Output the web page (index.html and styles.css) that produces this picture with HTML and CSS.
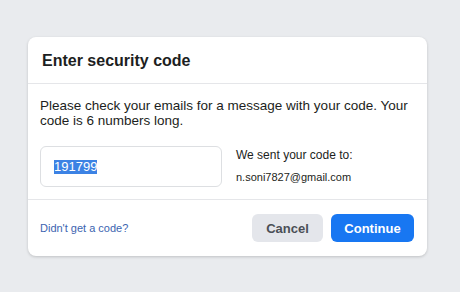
FILE: index.html
```html
<!DOCTYPE html>
<html>
<head>
<meta charset="utf-8">
<link rel="stylesheet" href="styles.css">
</head>
<body>
<div class="card">
  <div class="card-header">Enter security code</div>
  <div class="card-body">
    <p class="intro">Please check your emails for a message with your code. Your code is 6 numbers long.</p>
    <div class="code-row">
      <div class="code-input"><span class="sel">191799</span></div>
      <div class="sent">
        <div class="sent-label">We sent your code to:</div>
        <div class="sent-email">n.soni7827@gmail.com</div>
      </div>
    </div>
  </div>
  <div class="card-footer">
    <a class="link" href="#">Didn't get a code?</a>
    <div class="actions">
      <button class="btn btn-cancel">Cancel</button>
      <button class="btn btn-continue">Continue</button>
    </div>
  </div>
</div>
</body>
</html>
```
FILE: styles.css
```css
html, body {
  margin: 0;
  padding: 0;
}
body {
  background: #e9ebee;
  font-family: "Liberation Sans", Arial, sans-serif;
  color: #1c1e21;
  width: 460px;
  height: 292px;
  overflow: hidden;
}
.card {
  margin: 37px 0 0 28px;
  width: 399px;
  background: #fff;
  border-radius: 8px;
  box-shadow: 0 1px 3px rgba(0, 0, 0, 0.18);
}
.card-header {
  height: 47px;
  box-sizing: border-box;
  padding: 15px 0 0 14px;
  font-size: 16px;
  font-weight: bold;
  color: #1c1e21;
  border-bottom: 1px solid #e5e6e9;
}
.card-body {
  padding: 14px 12px 12px 12px;
  border-bottom: 1px solid #e5e6e9;
}
.intro {
  margin: 0;
  font-size: 13.5px;
  line-height: 15px;
  color: #1c1e21;
}
.code-row {
  display: flex;
  margin-top: 18px;
  gap: 14px;
}
.code-input {
  width: 182px;
  height: 41px;
  box-sizing: border-box;
  border: 1px solid #dddfe2;
  border-radius: 6px;
  padding: 0 0 0 13px;
  display: flex;
  align-items: center;
  font-size: 13px;
}
.sel {
  background: #3c82e4;
  color: #fff;
  line-height: 14px;
}
.sent {
  padding-top: 2px;
}
.sent-label {
  font-size: 12px;
  color: #1c1e21;
}
.sent-email {
  font-size: 11px;
  margin-top: 9px;
  color: #1c1e21;
}
.card-footer {
  display: flex;
  align-items: center;
  justify-content: space-between;
  padding: 14px 13px 14px 12px;
}
.link {
  font-size: 11px;
  color: #3b64b0;
  text-decoration: none;
}
.actions {
  display: flex;
  gap: 8px;
}
.btn {
  height: 28px;
  border: none;
  border-radius: 6px;
  font-family: "Liberation Sans", Arial, sans-serif;
  font-size: 13px;
  font-weight: bold;
  padding: 0;
}
.btn-cancel {
  width: 71px;
  background: #e4e6eb;
  color: #4b4f56;
}
.btn-continue {
  width: 83px;
  background: #1877f2;
  color: #fff;
}
```
